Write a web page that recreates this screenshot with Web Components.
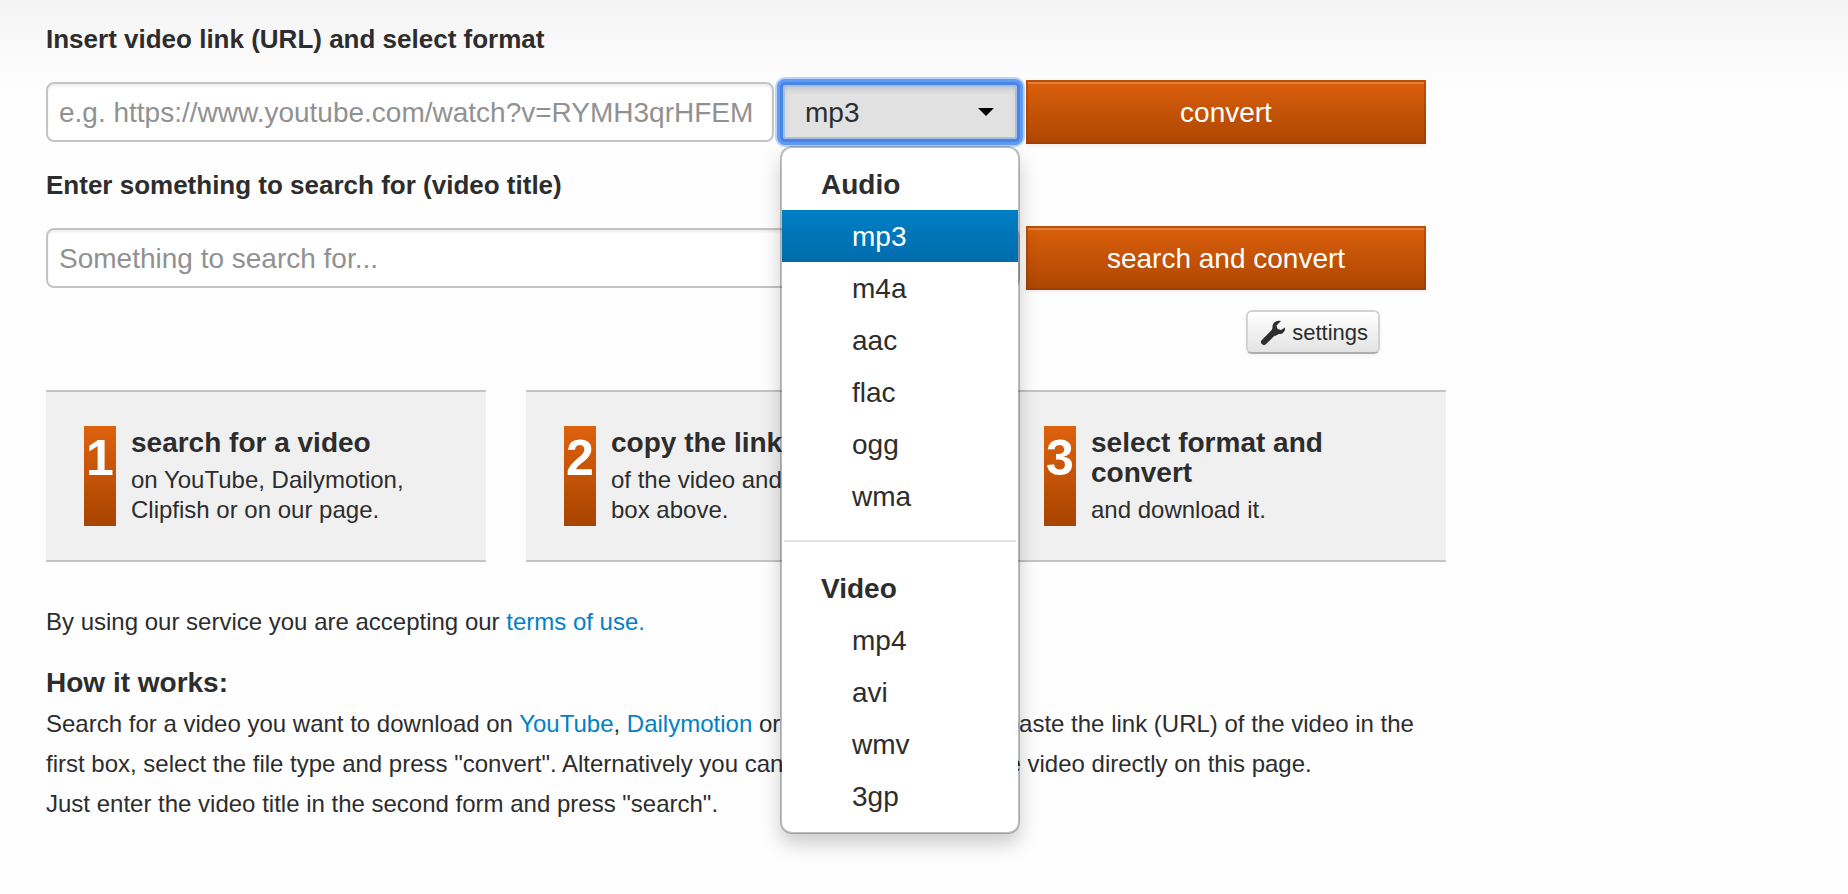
<!DOCTYPE html>
<html lang="en">
<head>
<meta charset="utf-8">
<title>Video converter</title>
<style>
  body {
    margin: 0;
    min-height: 100vh;
    background: #fefefe linear-gradient(#f4f4f4, #fefefe) 0 0 / 100% 96px no-repeat;
    color: #2d2d2d;
    font: 24px/40px "Liberation Sans", Arial, sans-serif;
  }
</style>
</head>
<body>
<converter-page></converter-page>
<script>
class BaseElement extends HTMLElement {
  connectedCallback() {
    if (this.shadowRoot) return;
    this.attachShadow({ mode: "open" }).innerHTML =
      "<style>*{box-sizing:border-box}</style>" + this.template();
    this.ready();
  }
  ready() {}
}

const FIELD = `
  .field { width: 100%; min-width: 0; height: 60px; margin: 0; padding: 2px 11px 0;
    border: 2px solid #c4c4c4; border-radius: 8px; background: #fff; color: #2d2d2d;
    box-shadow: inset 0 2px 3px rgba(0,0,0,.08); font: inherit; font-size: 28px; outline: none; }
  .field::placeholder { color: #919191; opacity: 1; }`;

customElements.define("action-button", class extends BaseElement {
  template() {
    return `<style>
      :host { display: block; }
      button { display: block; width: 100%; height: 64px; padding: 2px 0 0; border: 2px solid rgba(140,50,0,.35);
        background: linear-gradient(#db600c, #ad4602) border-box; color: #fff;
        font: inherit; font-size: 28px; cursor: pointer;
        box-shadow: inset 0 2px 0 rgba(255,255,255,.2), 0 2px 4px rgba(0,0,0,.06); }
    </style><button type="button"><slot></slot></button>`;
  }
});

customElements.define("format-select", class extends BaseElement {
  template() {
    const groups = { Audio: ["mp3", "m4a", "aac", "flac", "ogg", "wma"], Video: ["mp4", "avi", "wmv", "3gp"] };
    const options = Object.entries(groups).map(([name, list]) =>
      `<optgroup label="${name}">${list.map(f => `<option>${f}</option>`).join("")}</optgroup>`).join("");
    const menu = Object.entries(groups).map(([name, list]) =>
      `<div class="group" role="group" aria-label="${name}"><div class="head">${name}</div>${list.map(f =>
        `<button type="button" role="option" aria-selected="${f === "mp3"}">${f}</button>`).join("")}</div>`).join("");
    return `<style>
      :host { display: block; position: relative; }
      select { appearance: none; display: block; width: 100%; height: 60px; margin: 0; padding: 2px 22px 0;
        border: 3px solid #4a85e2; border-radius: 5px; background: #e1e1e1; color: #2d2d2d;
        font: inherit; font-size: 28px; outline: none;
        box-shadow: 0 0 0 3px #619bf8, 0 0 0 5px #bcd4fb, inset 0 0 0 2px #a5bfe6, inset 0 4px 6px rgba(0,0,0,.15); }
      .caret { position: absolute; top: 26px; right: 26px; pointer-events: none; }
      .menu { position: absolute; z-index: 2; top: 64px; left: 0; right: 0; padding: 10px 0;
        border: 2px solid rgba(0,0,0,.25); border-radius: 12px; background: #fff padding-box;
        box-shadow: 0 10px 20px rgba(0,0,0,.2); font-size: 28px; line-height: 50px; }
      .menu[hidden] { display: none; }
      .group + .group { margin: 18px 2px 0; padding-top: 20px; border-top: 2px solid #e2e2e2; }
      .group + .group .head { padding-left: 37px; }
      .group + .group button { padding-left: 68px; }
      .head { height: 52px; padding: 2px 0 0 39px; font-weight: bold; }
      button { display: block; width: 100%; height: 52px; padding: 2px 0 0 70px; border: 0;
        background: none; color: inherit; font: inherit; text-align: left; }
      button[aria-selected="true"] { background: linear-gradient(#007fc6, #006cab); color: #fff; }
    </style>
    <select aria-label="Format">${options}</select>
    <svg class="caret" width="16" height="8" viewBox="0 0 16 8" aria-hidden="true"><path d="M0 0H16L8 8Z"/></svg>
    <div class="menu" role="listbox" aria-label="Format">${menu}</div>`;
  }
  ready() {
    const root = this.shadowRoot, select = root.querySelector("select"), menu = root.querySelector(".menu");
    select.addEventListener("mousedown", e => { e.preventDefault(); select.focus(); menu.hidden = !menu.hidden; });
    menu.addEventListener("click", e => {
      const item = e.target.closest("button");
      if (!item) return;
      menu.querySelectorAll("button").forEach(b => b.setAttribute("aria-selected", b === item));
      select.value = item.textContent;
      menu.hidden = true;
    });
  }
});

customElements.define("convert-form", class extends BaseElement {
  template() {
    return `<style>
      :host { display: block; }
      label { display: block; padding-bottom: 21px; font-size: 26px; line-height: 40px; font-weight: bold; }
      .row { display: grid; grid-template-columns: minmax(0, 1fr) 400px; gap: 6px; align-items: center; }
      .inputs { display: flex; gap: 6px; }
      format-select { flex: 0 0 240px; }
      ${FIELD}
    </style>
    <label for="field"><slot name="label"></slot></label>
    <div class="row">
      <div class="inputs"><input class="field" id="field" type="text" placeholder="${this.getAttribute("hint")}">${
        this.hasAttribute("formats") ? "<format-select></format-select>" : ""}</div>
      <action-button><slot></slot></action-button>
    </div>`;
  }
});

customElements.define("settings-button", class extends BaseElement {
  template() {
    return `<style>
      :host { display: flex; justify-content: flex-end; }
      button { display: flex; align-items: center; gap: 6px; height: 44px; padding: 2px 10px 0 12px;
        border: 2px solid #d2d2d2; border-bottom-color: #adadad; border-radius: 6px;
        background: linear-gradient(#fff, #e3e3e3) padding-box; box-shadow: 0 2px 4px rgba(0,0,0,.05);
        color: #2d2d2d; font: inherit; font-size: 22px; }
    </style>
    <button type="button"><svg width="26" height="26" viewBox="0 0 26 26" aria-hidden="true">
      <path d="M4 22 15 11" stroke="#2d2d2d" stroke-width="6" stroke-linecap="round"/>
      <path fill="#2d2d2d" d="M21 1C16 0 12 3 12.500 8L11 12l4 4 4-2c4 .5 6.500-3 6-6.500l-4 2.500-3.500-1-1-3.500z"/>
    </svg><slot></slot></button>`;
  }
});

customElements.define("step-card", class extends BaseElement {
  template() {
    return `<style>
      :host { display: flex; align-items: flex-start; gap: 15px; padding: 34px 28px 34px 38px; min-height: 172px; box-sizing: border-box;
        border: solid #c4c4c4; border-width: 2px 0; background: #f0f0f0; line-height: 30px; }
      .badge { flex: 0 0 32px; height: 100px; padding-top: 12px; background: linear-gradient(#de620e, #a94400);
        color: #fff; font-size: 50px; line-height: 40px; font-weight: bold; text-align: center; }
      .text { padding-top: 2px; max-width: 324px; }
      h2 { max-width: 280px; margin: 0 0 7px; font-size: 28px; line-height: 30px; }
      p { margin: 0; }
    </style>
    <div class="badge">${this.getAttribute("number")}</div>
    <div class="text"><h2><slot name="title"></slot></h2><p><slot></slot></p></div>`;
  }
});

customElements.define("converter-page", class extends BaseElement {
  template() {
    return `<style>
      :host { display: block; max-width: 1400px; padding: 19px 46px 70px 46px; }
      .forms { display: grid; gap: 21px; padding-right: 20px; }
      settings-button { margin: 20px 66px 36px 0; }
      .steps { display: grid; grid-template-columns: repeat(3, minmax(0, 1fr)); gap: 40px; }
      p { margin: 0; }
      .terms { margin-top: 40px; }
      h2 { margin: 21px 0 1px; font-size: 28px; line-height: 40px; }
      a { color: #0081c6; text-decoration: none; }
    </style>
    <main>
      <div class="forms">
        <convert-form formats hint="e.g. https://www.youtube.com/watch?v=RYMH3qrHFEM"><span slot="label">Insert video link (URL) and select format</span>convert</convert-form>
        <convert-form hint="Something to search for..."><span slot="label">Enter something to search for (video title)</span>search and convert</convert-form>
      </div>
      <settings-button>settings</settings-button>
      <div class="steps">
        <step-card number="1"><span slot="title">search for a video</span>on YouTube, Dailymotion,<br>Clipfish or on our page.</step-card>
        <step-card number="2"><span slot="title">copy the link</span>of the video and put it in the<br>box above.</step-card>
        <step-card number="3"><span slot="title">select format and convert</span>and download it.</step-card>
      </div>
      <p class="terms">By using our service you are accepting our <a href="#terms">terms of use.</a></p>
      <h2>How it works:</h2>
      <p>Search for a video you want to download on <a href="#youtube">YouTube</a>, <a href="#dailymotion">Dailymotion</a> or <a href="#clipfish">Clipfish</a>, and copy &amp; paste the link (URL) of the video in the<br>first box, select the file type and press "convert". Alternatively you can instead search for the video directly on this page.<br>Just enter the video title in the second form and press "search".</p>
    </main>`;
  }
});
</script>
</body>
</html>
